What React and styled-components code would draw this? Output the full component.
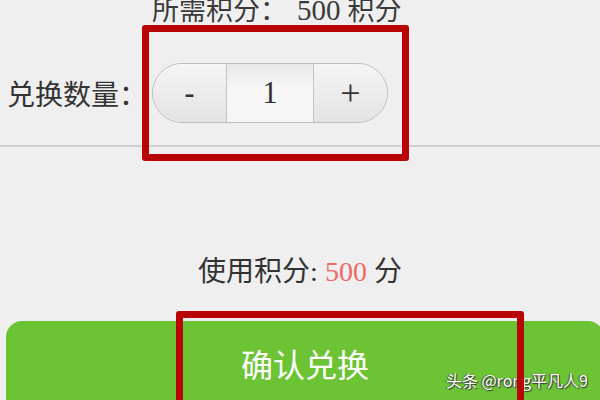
import React, { useState } from "react";
import styled, { createGlobalStyle } from "styled-components";

const GlobalStyle = createGlobalStyle`
  html, body {
    margin: 0;
    padding: 0;
    background: #efefef;
    overflow: hidden;
  }
  body {
    width: 600px;
    height: 400px;
    font-family: "Liberation Serif", "Noto Sans CJK SC", serif;
    color: #333;
  }
`;

const Page = styled.div`
  position: relative;
  width: 600px;
  height: 400px;
  overflow: hidden;
  display: flex;
  flex-direction: column;
`;

const Required = styled.div`
  margin: -3px 0 0 152px;
  font-size: 27px;
  line-height: 26px;
  white-space: nowrap;
  color: #3a3a3a;
`;

const Num = styled.span`
  font-size: 29px;
  margin: 0 7px 0 10px;
`;

const QtyRow = styled.div`
  display: flex;
  align-items: center;
  margin-top: 39px;
  padding-left: 7px;
  height: 60px;
`;

const Label = styled.span`
  font-size: 28px;
  width: 145px;
  white-space: nowrap;
  color: #333;
`;

const Stepper = styled.div`
  position: relative;
  display: flex;
  width: 236px;
  height: 60px;
  box-sizing: border-box;
  border: 1px solid #bcbcbc;
  border-radius: 30px;
`;

const StepBtn = styled.button`
  width: ${(p) => p.$w}px;
  height: 100%;
  border: none;
  padding: 0;
  margin: 0;
  font-family: "Liberation Serif", serif;
  font-size: ${(p) => p.$size}px;
  font-weight: ${(p) => (p.$side === "left" ? 700 : 400)};
  color: #333;
  background: linear-gradient(#f5f5f5, #e3e3e3);
  border-radius: ${(p) => (p.$side === "left" ? "30px 0 0 30px" : "0 30px 30px 0")};
  border-${(p) => (p.$side === "left" ? "right" : "left")}: 1px solid #c3c3c3;
  display: flex;
  align-items: center;
  justify-content: center;
  cursor: pointer;
`;

const Count = styled.div`
  flex: 1;
  display: flex;
  align-items: center;
  justify-content: center;
  font-size: 31px;
  background: linear-gradient(#e8e8e8, #f6f6f6 40%, #f6f6f6);
  color: #333;
`;

const Highlight = styled.div`
  position: absolute;
  top: ${(p) => p.$top}px;
  left: ${(p) => p.$left}px;
  width: ${(p) => p.$w}px;
  height: ${(p) => p.$h}px;
  border: 7px solid #b80606;
  border-radius: 3px;
  box-sizing: border-box;
  pointer-events: none;
  z-index: 1;
`;

const Divider = styled.div`
  margin-top: 22px;
  width: 600px;
  height: 2px;
  flex-shrink: 0;
  background: #cfcfcf;
`;

const UsedPoints = styled.div`
  margin-top: 110px;
  text-align: center;
  font-size: 28px;
  line-height: 30px;
  color: #333;
`;

const Red = styled.span`
  color: #f06868;
`;

const ConfirmButton = styled.button`
  position: relative;
  margin: 34px 0 0 6px;
  width: 598px;
  height: 100px;
  flex-shrink: 0;
  border: none;
  border-radius: 16px;
  background: #6cc435;
  color: #fff;
  font-family: "Noto Sans CJK SC", sans-serif;
  font-size: 32px;
  display: flex;
  justify-content: center;
  padding: 19px 0 0 0;
  box-sizing: border-box;
`;

const Watermark = styled.div`
  position: absolute;
  right: 12px;
  bottom: 10px;
  font-family: "Noto Sans CJK SC", sans-serif;
  font-size: 16px;
  line-height: 20px;
  color: #fff;
  text-shadow: 1px 1px 1px #333, -1px 0 1px #444;
  white-space: nowrap;
`;

export default function App() {
  const [qty, setQty] = useState(1);

  return (
    <Page>
      <GlobalStyle />
      <Required>
        所需积分：<Num>500</Num>积分
      </Required>
      <QtyRow>
        <Label>兑换数量：</Label>
        <Stepper>
          <StepBtn $side="left" $w={74} $size={30} onClick={() => setQty(Math.max(1, qty - 1))}>
            -
          </StepBtn>
          <Count>{qty}</Count>
          <StepBtn $side="right" $w={74} $size={36} onClick={() => setQty(qty + 1)}>
            +
          </StepBtn>
          <Highlight $top={-39} $left={-11} $w={267} $h={136} />
        </Stepper>
      </QtyRow>
      <Divider />
      <UsedPoints>
        使用积分: <Red>{500 * qty}</Red> 分
      </UsedPoints>
      <ConfirmButton>
        确认兑换
        <Highlight $top={-10} $left={170} $w={348} $h={140} />
      </ConfirmButton>
      <Watermark>头条 @rong平凡人9</Watermark>
    </Page>
  );
}
